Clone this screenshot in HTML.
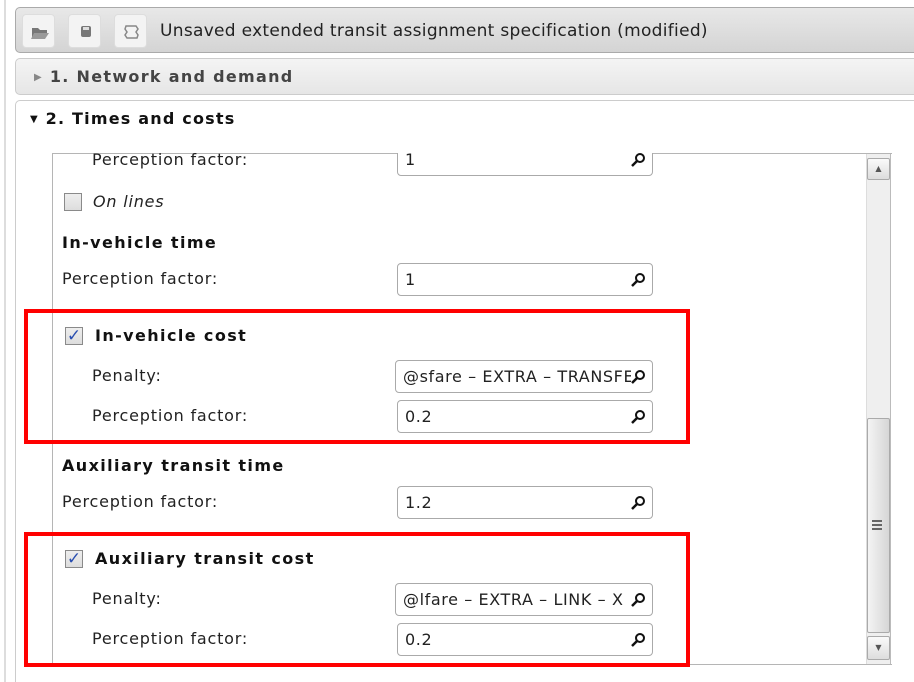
<!DOCTYPE html>
<html style="overflow:hidden;height:682px"><head><meta charset="utf-8"><style>
*{box-sizing:border-box;margin:0;padding:0}
body{width:914px;height:682px;background:#fff;position:relative;overflow:hidden;font-family:"DejaVu Sans","Liberation Sans",sans-serif;color:#222}
.a{position:absolute}
.t{position:absolute;font-size:16px;line-height:18px;white-space:nowrap;letter-spacing:0.8px}
.b{font-weight:bold;color:#111;letter-spacing:1.4px}
.in{position:absolute;height:33px;border:1px solid #aaa;border-radius:4px;background:#fff;font-size:16px;line-height:31px;padding-left:7px;overflow:hidden;white-space:nowrap;letter-spacing:0.6px}
.in svg{position:absolute;right:7px;top:9px}
.cb{position:absolute;width:18px;height:18px;border:1px solid #8a8a8a;background:linear-gradient(#eee,#ddd)}
.red{position:absolute;border:4px solid #f00}
.btn{position:absolute;top:14px;width:33px;height:34px;background:#f3f3f3;border-radius:4px;border:1px solid #ddd}
</style></head><body>
<div class="a" style="left:4px;top:0;width:2px;height:682px;background:#ddd"></div>
<div class="a" style="left:15px;top:7px;width:910px;height:46px;border:1px solid #aaa;border-radius:5px;background:linear-gradient(#e8e8e8,#d4d4d4)"></div>
<div class="btn" style="left:22px"><svg width="33" height="34"><path d="M9 13h6l2 2h7v3H13l-4 5z" fill="#777"/><path d="M11 18h15l-4 6H8z" fill="#999"/></svg></div>
<div class="btn" style="left:68px"><svg width="33" height="34"><rect x="12" y="11" width="10" height="11" rx="2" fill="#777"/><rect x="14" y="12" width="6" height="3" fill="#ddd"/></svg></div>
<div class="btn" style="left:114px"><svg width="33" height="34"><path d="M11 11h10l2 3-2 3 2 3-1 3H12l-2-3 2-3-2-3z" fill="none" stroke="#888" stroke-width="1.5"/></svg></div>
<div class="t" style="left:160px;top:21px;font-size:17px;line-height:20px;letter-spacing:0.3px">Unsaved extended transit assignment specification (modified)</div>
<div class="a" style="left:15px;top:58px;width:910px;height:37px;border:1px solid #ccc;border-radius:5px;background:linear-gradient(#f4f4f4,#e6e6e6)"></div>
<div class="t b" style="left:34px;top:67px;font-size:16px;line-height:20px;color:#444;letter-spacing:1.3px"><span style="font-size:10px;color:#888;vertical-align:2px">▶</span> 1. Network and demand</div>
<div class="a" style="left:15px;top:100px;width:910px;height:600px;border:1px solid #ccc;border-radius:5px;background:#fff"></div>
<div class="t b" style="left:30px;top:109px;font-size:16px;line-height:20px;letter-spacing:1.2px"><span style="font-size:10px;vertical-align:2px">▼</span> 2. Times and costs</div>
<div class="a" style="left:52px;top:153px;width:840px;height:512px;border:1px solid #b5b5b5;border-right:none"></div>
<div class="a" style="left:866px;top:154px;width:25px;height:510px;background:#efefef;border-left:1px solid #ddd;border-right:1px solid #bbb"></div>
<div class="a" style="left:867px;top:158px;width:23px;height:22px;border:1px solid #aaa;border-radius:2px;background:linear-gradient(#fafafa,#ddd);font-size:8px;text-align:center;line-height:20px;color:#555">▲</div>
<div class="a" style="left:867px;top:418px;width:23px;height:215px;border:1px solid #aaa;border-radius:2px;background:linear-gradient(90deg,#f4f4f4,#d6d6d6)"></div>
<div class="a" style="left:872px;top:520px;width:10px;height:12px;background:repeating-linear-gradient(#666 0 2px,transparent 2px 4px)"></div>
<div class="a" style="left:867px;top:636px;width:23px;height:24px;border:1px solid #aaa;border-radius:2px;background:linear-gradient(#fafafa,#ddd);font-size:8px;text-align:center;line-height:22px;color:#555">▼</div>

<svg width="0" height="0" style="position:absolute"><defs><g id="m"><circle cx="9" cy="5" r="4" fill="none" stroke="#111" stroke-width="2"/><path d="M6 8l-5 5" stroke="#111" stroke-width="2.5"/></g></defs></svg>

<div class="in" style="left:397px;top:143px;width:256px">1<svg width="14" height="14"><use href="#m"/></svg></div>
<div class="a" style="left:53px;top:140px;width:812px;height:13px;background:#fff"></div>
<div class="t" style="left:92px;top:151px">Perception factor:</div>

<div class="cb" style="left:64px;top:193px"></div>
<div class="t" style="left:93px;top:193px;font-style:italic">On lines</div>
<div class="t b" style="left:62px;top:234px">In-vehicle time</div>
<div class="t" style="left:62px;top:270px">Perception factor:</div>
<div class="in" style="left:397px;top:263px;width:256px">1<svg width="14" height="14"><use href="#m"/></svg></div>

<div class="red" style="left:24px;top:309px;width:666px;height:135px"></div>
<div class="cb" style="left:65px;top:327px;color:#2a4fb0;font-size:17px;font-weight:bold;line-height:16px;text-align:center">✓</div>
<div class="t b" style="left:95px;top:327px">In-vehicle cost</div>
<div class="t" style="left:92px;top:367px">Penalty:</div>
<div class="in" style="left:395px;top:360px;width:258px">@sfare – EXTRA – TRANSFER<svg width="14" height="14" style="background:#fff"><use href="#m"/></svg></div>
<div class="t" style="left:92px;top:407px">Perception factor:</div>
<div class="in" style="left:397px;top:400px;width:256px">0.2<svg width="14" height="14"><use href="#m"/></svg></div>

<div class="t b" style="left:62px;top:457px">Auxiliary transit time</div>
<div class="t" style="left:62px;top:493px">Perception factor:</div>
<div class="in" style="left:397px;top:486px;width:256px">1.2<svg width="14" height="14"><use href="#m"/></svg></div>

<div class="red" style="left:24px;top:532px;width:666px;height:135px"></div>
<div class="cb" style="left:65px;top:550px;color:#2a4fb0;font-size:17px;font-weight:bold;line-height:16px;text-align:center">✓</div>
<div class="t b" style="left:95px;top:550px">Auxiliary transit cost</div>
<div class="t" style="left:92px;top:590px">Penalty:</div>
<div class="in" style="left:395px;top:583px;width:258px">@lfare – EXTRA – LINK – X<svg width="14" height="14" style="background:#fff"><use href="#m"/></svg></div>
<div class="t" style="left:92px;top:630px">Perception factor:</div>
<div class="in" style="left:397px;top:623px;width:256px">0.2<svg width="14" height="14"><use href="#m"/></svg></div>
</body></html>
